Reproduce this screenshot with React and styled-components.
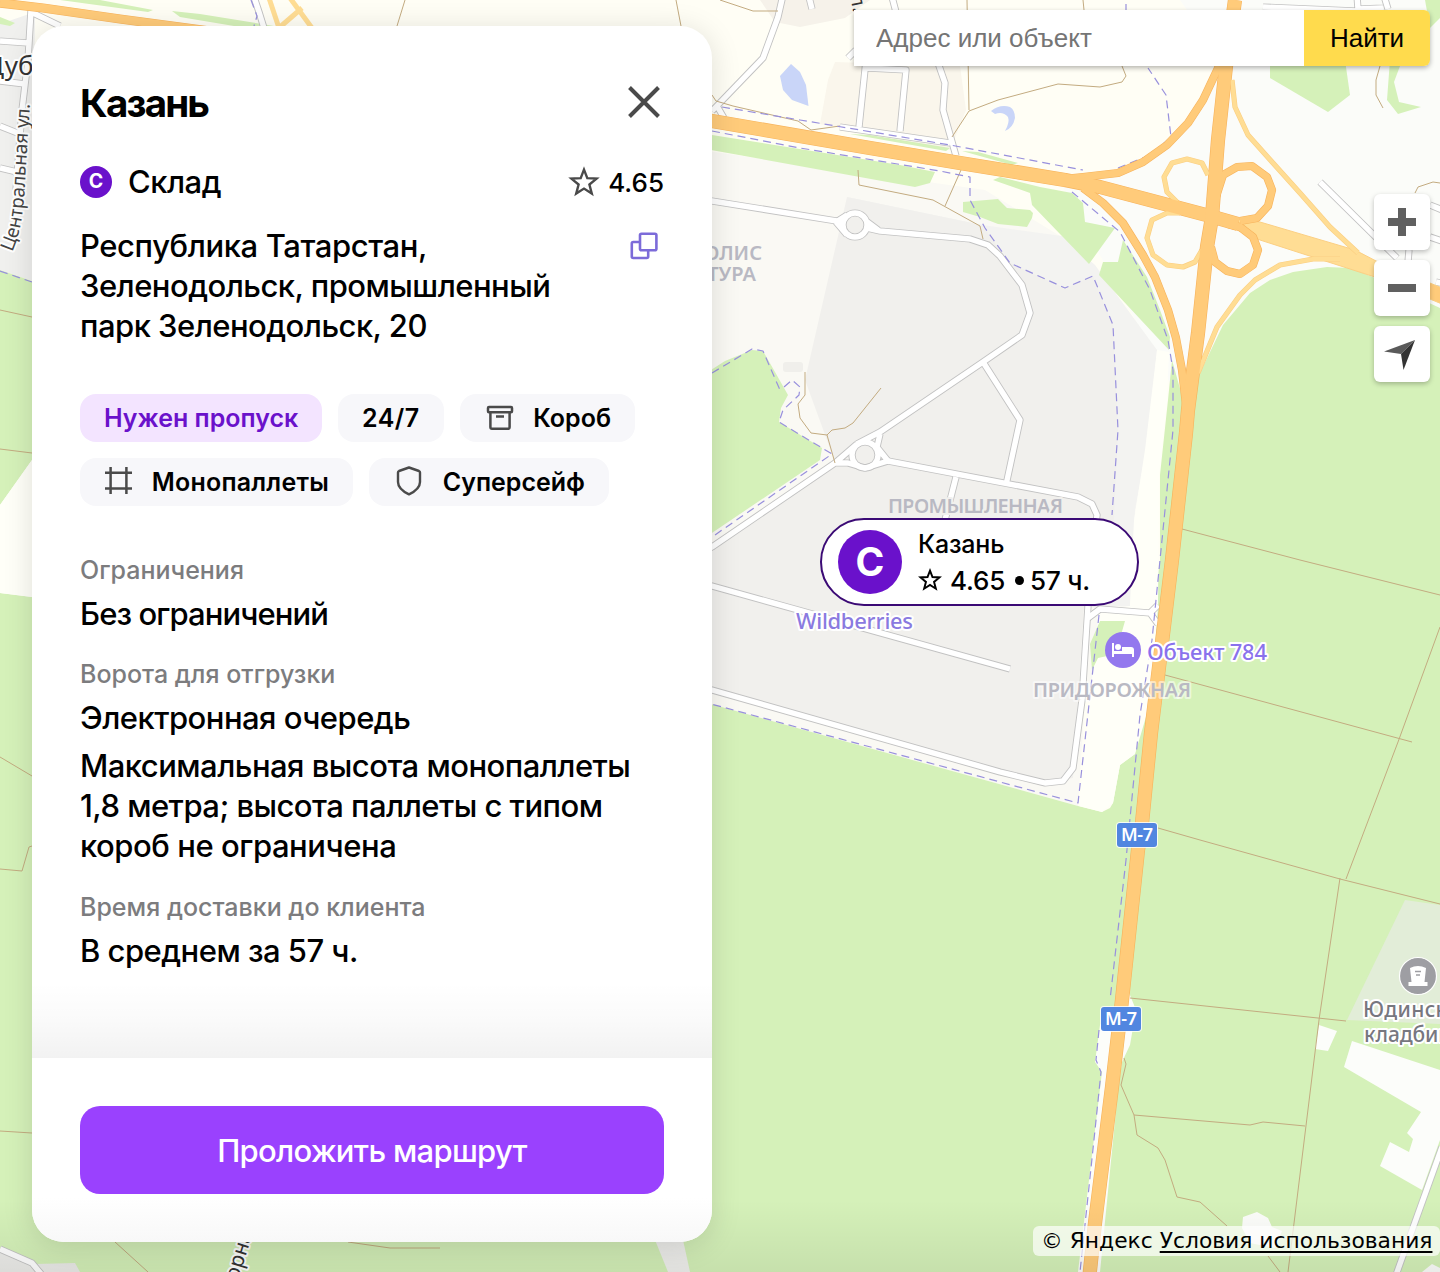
import React from "react";
import styled, { createGlobalStyle } from "styled-components";

const GlobalStyle = createGlobalStyle`
  * {
    box-sizing: border-box;
  }
  body {
    margin: 0;
    font-family: Inter, Roboto, "Liberation Sans", sans-serif;
    color: #000;
  }
  p, h1 {
    margin: 0;
  }
  button {
    border: none;
    padding: 0;
    font-family: inherit;
    cursor: pointer;
  }
`;

const Page = styled.main`
  position: relative;
  width: 1440px;
  height: 1272px;
  overflow: hidden;
  background-color: #fffef5;
`;

const MapCanvas = styled.svg`
  display: block;
  width: 1440px;
  height: 1272px;
`;

const MapLabel = styled.text`
  font-family: "Noto Sans", "Open Sans", sans-serif;
  font-size: ${({ $size }) => $size || 20}px;
  font-weight: ${({ $weight }) => $weight || 500};
  fill: ${({ $color }) => $color || "#b9b9c3"};
  stroke: ${({ $halo }) => $halo || "none"};
  stroke-width: 4px;
  stroke-linejoin: round;
  paint-order: stroke;
`;

const Card = styled.section`
  position: absolute;
  top: 26px;
  left: 32px;
  width: 680px;
  height: 1216px;
  display: flex;
  flex-direction: column;
  overflow: hidden;
  border-radius: 32px;
  background-color: white;
  box-shadow: 0 4px 30px rgba(0, 0, 0, 0.13);
`;

const CardBody = styled.div`
  flex: 1;
  padding: 53px 48px 0;
  background: linear-gradient(to bottom, rgba(0, 0, 0, 0) 0, rgba(0, 0, 0, 0.02) 50%, rgba(0, 0, 0, 0.05) 100%) bottom /
    100% 76px no-repeat;
`;

const CardFooter = styled.footer`
  height: 184px;
  padding: 48px 48px 0;
  background: linear-gradient(to bottom, white 76%, #f8f8f8 100%);
`;

const Row = styled.div`
  display: flex;
  justify-content: space-between;
  align-items: ${({ $align }) => $align || "center"};
  height: ${({ $height }) => $height}px;
  margin-bottom: ${({ $gap }) => $gap || 0}px;
`;

const Title = styled.h1`
  font-size: 38.5px;
  line-height: 48px;
  font-weight: 700;
  letter-spacing: -1.8px;
`;

const CloseButton = styled.button`
  display: flex;
  width: 40px;
  height: 40px;
  background-color: transparent;
`;

const Kind = styled.div`
  display: flex;
  align-items: center;
  gap: 16px;
  font-size: 31px;
  line-height: 38px;
  font-weight: 500;
  letter-spacing: -0.5px;
`;

const Avatar = styled.span`
  display: flex;
  flex-shrink: 0;
  align-items: center;
  justify-content: center;
  width: ${({ $size }) => $size}px;
  height: ${({ $size }) => $size}px;
  border-radius: 50%;
  background-color: #6a11cb;
  color: white;
  font-size: ${({ $size }) => $size * 0.61}px;
  line-height: 1;
  font-weight: 650;
  letter-spacing: 0;
`;

const Rating = styled.div`
  display: flex;
  align-items: center;
  gap: 8px;
  font-size: 26px;
  font-weight: 500;
`;

const Text = styled.p`
  font-size: 31px;
  line-height: 40px;
  font-weight: 500;
  letter-spacing: ${({ $spacing }) => $spacing ?? -0.53}px;
  margin-bottom: ${({ $gap }) => $gap || 0}px;
  white-space: nowrap;
`;

const Caption = styled.p`
  font-size: 25px;
  line-height: 32px;
  font-weight: 500;
  color: #7c7c7e;
  margin-bottom: 8px;
  white-space: nowrap;
`;

const Chips = styled.div`
  display: flex;
  flex-wrap: wrap;
  gap: 16px;
  margin: 48px 0;
`;

const Chip = styled.div`
  display: flex;
  align-items: center;
  justify-content: space-between;
  width: ${({ $width }) => $width}px;
  height: 48px;
  padding: 0 24px;
  border-radius: 16px;
  background-color: ${({ $accent }) => ($accent ? "#f3e4ff" : "#f7f7fa")};
  color: ${({ $accent }) => ($accent ? "#6a11cb" : "#000")};
  font-size: 25px;
  font-weight: 600;
  letter-spacing: ${({ $spacing }) => $spacing || 0}px;
  white-space: nowrap;
`;

const RouteButton = styled.button`
  width: 100%;
  height: 88px;
  border-radius: 20px;
  background-color: #9a41fe;
  color: white;
  font-size: 31px;
  font-weight: 500;
  letter-spacing: -0.7px;
`;

const Marker = styled.div`
  position: absolute;
  top: 518px;
  left: 820px;
  display: flex;
  align-items: center;
  gap: 16px;
  width: 319px;
  height: 88px;
  padding-left: 16px;
  border: 2px solid #3b0a75;
  border-radius: 44px;
  background-color: white;
`;

const MarkerLine = styled.p`
  display: flex;
  align-items: center;
  height: 36px;
  font-size: ${({ $size }) => $size}px;
  font-weight: 500;
  letter-spacing: ${({ $spacing }) => $spacing || 0}px;
  white-space: pre;
`;

const MarkerStar = styled.span`
  display: flex;
  margin-right: 8px;
`;

const Dot = styled.span`
  width: 9px;
  height: 9px;
  margin: 0 6px 0 10px;
  border-radius: 50%;
  background-color: #000;
`;

const Search = styled.form`
  position: absolute;
  top: 10px;
  left: 854px;
  display: flex;
  width: 576px;
  height: 56px;
  border-radius: 0 6px 6px 0;
  box-shadow: 0 2px 5px rgba(0, 0, 0, 0.3);
  overflow: hidden;
`;

const SearchInput = styled.input`
  width: 450px;
  padding: 0 22px;
  border: none;
  outline: none;
  background-color: white;
  font-family: "Liberation Sans", Arial, sans-serif;
  font-size: 26px;
  &::placeholder {
    color: #757575;
    opacity: 1;
  }
`;

const SearchButton = styled.button`
  flex: 1;
  background-color: #ffdb4d;
  color: #000;
  && {
    font-family: "Liberation Sans", Arial, sans-serif;
  }
  font-size: 26px;
`;

const Controls = styled.div`
  position: absolute;
  top: 194px;
  left: 1374px;
  display: flex;
  flex-direction: column;
  gap: 10px;
`;

const ControlButton = styled.button`
  width: 56px;
  height: 56px;
  border-radius: 6px;
  background-color: white;
  box-shadow: 0 2px 5px rgba(0, 0, 0, 0.25);
  svg {
    display: block;
  }
`;

const Copyright = styled.div`
  position: absolute;
  top: 1226px;
  left: 1033px;
  width: 407px;
  height: 30px;
  padding-left: 8px;
  border-radius: 6px;
  background-color: rgba(255, 255, 255, 0.68);
  font-family: "DejaVu Sans", sans-serif;
  font-size: 21.8px;
  line-height: 29px;
  white-space: nowrap;
  a {
    color: #000;
    text-underline-offset: 3px;
  }
`;

const GREEN = "#d5f1b9";
const ORANGE = "#ffcb7a";
const ORANGE_EDGE = "#f7b35c";
const LIGHT_ORANGE = "#ffdd94";

const FORESTS = [
  "700,701 1078,806 1102,812 1110,808 1113,803 1120,765 1135,754 1141,705 1160,560 1160,475 1168,400 1172,360 1186,410 1198,377 1223,325 1250,293 1270,280 1293,272 1327,267 1350,268 1373,277 1440,308 1440,1272 0,1272 0,593 32,597 700,701",
  "0,270 32,281 32,460 0,505",
  "700,377 725,361 752,350 763,351 775,372 788,395 781,408 779,422 822,448 820,460 700,541",
  "700,133 712,135 900,165 935,172 930,183 915,187 700,148",
  "850,134 870,135 950,148 946,151",
  "962,151 978,152 1018,163 1012,165",
  "993,180 1000,177 1040,187 1072,193 1083,203 1085,222 1115,228 1089,264 1032,205 1030,193",
  "1123,240 1147,277 1160,310 1170,337 1169,350 1099,275 1103,262 1118,262",
  "963,202 998,199 1007,208 1030,210 1033,213 1032,218 1027,227 998,224 980,217 963,212",
  "1270,60 1345,60 1350,95 1328,112 1270,78",
  "1390,60 1400,66 1394,82 1399,102 1421,107 1398,114 1387,100",
  "1425,0 1440,0 1440,18 1430,28",
  "60,0 100,0 153,10 148,12",
  "0,17 15,23 10,26 0,24",
  "172,11 200,14 280,27 240,27 180,17",
];

const HIGHWAYS = [
  { w: 4, light: true, d: "M1232 80 L1235 107 L1248 135 L1273 163 L1300 193 L1330 227 L1358 253" },
  { w: 4, light: true, d: "M1198 373 L1217 327 L1240 295 L1255 280 L1280 265 L1313 259 L1340 259" },
  { w: 4, light: true, d: "M1208 175 L1202 163 L1187 159 L1172 163 L1164 177 L1167 192 L1179 204" },
  { w: 4, light: true, d: "M1202 250 L1195 262 L1183 267 L1167 265 L1153 255 L1147 238 L1152 220 L1167 213 L1180 213" },
  { w: 7, d: "M1219 66 L1203 100 L1188 123 L1167 145 L1143 162 L1118 173 L1083 177 L1063 179" },
  { w: 7, d: "M1083 188 L1103 203 L1123 223 L1143 255 L1155 277 L1168 310 L1176 338 L1182 370 L1186 405" },
  { w: 7, d: "M1215 200 L1223 175 L1237 167 L1252 166 L1267 177 L1272 190 L1268 206 L1257 218 L1240 221" },
  { w: 7, d: "M1211 247 L1215 262 L1227 271 L1240 274 L1253 265 L1258 250 L1253 237 L1240 227 L1228 224" },
  { w: 13, d: "M700 119 L712 121 L870 148 L960 163 L1065 180 L1100 187 L1210 216 L1238 224" },
  { w: 13, d: "M1235 0 L1226 66 L1218 140 L1212 217 L1207 247 L1198 333 L1188 410 L1186 433 L1172 560 L1151 733 L1142 823 L1138 850 L1122 1000 L1112 1087 L1095 1223 L1089 1280" },
  { w: 8, d: "M0 3 L43 8 L120 19 L210 31" },
];

const ROADS = [
  "M700 199 L712 201 L843 222 M867 228 L880 231 L970 239 L988 245 L1000 256 L1022 285 L1030 313 L1022 335 L983 362 L880 432 L857 444",
  "M843 225 A12 12 0 1 1 867 225 A12 12 0 1 1 843 225 M836 222 L847 215 M836 222 L847 235 M866 221 L878 230",
  "M983 362 L1020 420 L1006 485",
  "M700 554 L712 547 L835 463 L857 444 M835 463 L848 463 L865 468 L888 461 L1078 497 L1092 504 L1097 515 L1095 530",
  "M852 455 A13 13 0 1 1 878 455 A13 13 0 1 1 852 455 M877 447 L880 434 M876 446 L888 461",
  "M956 477 L945 520",
  "M700 583 L712 586 L1010 669",
  "M700 687 L712 690 L1000 772 L1045 783 L1063 781 L1073 768 L1082 700 L1088 606",
  "M1088 618 L1100 609 L1150 613 L1158 605 M1150 613 L1158 624",
  "M783 -5 L778 17 L763 58 L712 111 M717 106 L724 118",
  "M809 -3 L812 9",
  "M892 -3 L896 12",
  "M848 58 L856 50",
  "M866 60 L859 127 M866 68 L906 70 L900 131",
  "M937 60 L945 83 L943 110 L956 156 M840 127 L950 143",
  "M1320 182 L1397 258 M1430 205 L1445 211 M1430 237 L1445 242 M1408 262 L1409 250 M1436 282 L1445 284",
  "M1263 7 L1357 11 M1357 -4 L1358 9 L1383 8 M1384 -4 L1388 9",
  "M1442 1147 L1396 1275",
  "M31 10 L28 60 L22 110 L16 190 M31 12 L60 26 M0 41 L28 43 M0 81 L25 84 M0 126 L20 134 M0 168 L17 172",
  "M254 -3 L259 12 L264 28",
  "M0 1249 L32 1263 L42 1275",
];

const TRACKS = [
  "M720 0 L753 11 L778 11",
  "M967 0 L969 110 M952 137 L969 111 L998 100 L1058 84 L1100 87 L1122 82 L1126 76 L1122 66",
  "M712 95 L716 101 L733 106 L798 121 L811 130 L840 126",
  "M858 170 L859 185 L933 200 L980 226 L983 239 M961 170 L945 206",
  "M805 372 L805 395 L798 404 L800 418 L811 433 L827 435 L835 463 M827 435 L832 430 L845 428 L853 423 L881 388",
  "M1083 0 L1084 10 M405 0 L397 26 M676 0 L681 26",
  "M1380 66 L1376 80 L1376 95 L1383 108 M1415 193 L1418 187 L1433 182 L1440 183",
  "M1182 529 L1300 560 L1440 595",
  "M1165 675 L1412 742",
  "M1440 627 L1398 742 L1346 879",
  "M1158 828 L1200 840 L1340 879 L1440 904",
  "M1340 878 L1319 1020 L1288 1272",
  "M1130 998 L1346 1021",
  "M1124 1058 L1126 1064 L1121 1085 L1134 1115 L1137 1135 L1158 1148 L1165 1160 L1177 1197 L1200 1202 L1227 1226",
  "M1134 1115 L1250 1125 L1263 1122 L1305 1126 M1268 1256 L1280 1272",
  "M0 310 L32 317 M0 449 L32 453 M0 757 L32 776 M0 869 L22 871 L29 847 L32 846 M0 1131 L32 1133",
  "M115 1242 L148 1272 M348 1242 L390 1248 L440 1248",
];

const BORDERS = [
  "M722 107 L800 120 L950 145 L1083 170",
  "M1118 168 L1150 155 L1171 137 L1166 95 L1148 68 M1126 4 L1126 10",
  "M712 131 L800 148 L940 171 L970 177 L970 200 L985 228 L1010 263 L1065 288 L1093 276 L1113 325 L1118 430 L1112 515",
  "M1072 192 L1120 232 L1150 290 L1168 340 L1173 370 L1173 430 L1160 560 L1152 640 L1140 715 L1126 860 L1110 1000",
  "M1099 1030 L1096 1060 L1101 1072 L1095 1130 L1080 1272",
  "M1099 615 L1078 803 L700 701",
  "M712 373 L752 349 L763 351 L780 390 M784 387 L792 380 L800 387 L799 395 L783 410 L779 422 L832 454 L712 537",
  "M251 0 L257 16 L254 26 M0 271 L32 282",
];

const StarIcon = ({ size, color, stroke = 2 }) => (
  <svg width={size} height={size} viewBox="0 0 32 32" fill="none" stroke={color} strokeWidth={stroke}>
    <path d="M16 3.6 L19.3 12.1 L28.6 12.6 L21.4 18.5 L23.8 27.6 L16 22.6 L8.2 27.6 L10.6 18.5 L3.4 12.6 L12.7 12.1 Z" />
  </svg>
);

const CloseIcon = () => (
  <svg width="40" height="40" viewBox="0 0 40 40" fill="none" stroke="#4a4a4a" strokeWidth="4">
    <path d="M5.5 4.5 L34.5 33.5 M34.5 4.5 L5.5 33.5" />
  </svg>
);

const CopyIcon = () => (
  <svg width="40" height="40" viewBox="0 0 40 40" fill="none" stroke="#7c6bd9" strokeWidth="2.6" strokeLinejoin="round">
    <rect x="16" y="7.8" width="16.4" height="16.4" rx="1.5" />
    <path d="M16 16 H9.2 Q7.8 16 7.8 17.4 V30.6 Q7.8 32 9.2 32 H22.8 Q24.2 32 24.2 30.6 V24.2" />
  </svg>
);

const BoxIcon = () => (
  <svg width="32" height="32" viewBox="0 0 32 32" fill="none" stroke="#4a4a4a" strokeWidth="2.5" strokeLinejoin="round">
    <rect x="4" y="5" width="24" height="5.2" rx="1" />
    <path d="M6.4 10.4 V25 Q6.4 26.8 8 26.8 H24 Q25.6 26.8 25.6 25 V10.4 M12 14.6 H20" />
  </svg>
);

const PalletIcon = () => (
  <svg width="32" height="32" viewBox="0 0 32 32" fill="none" stroke="#4a4a4a" strokeWidth="2.5">
    <path d="M1 6.8 H28 M1 22.6 H28 M6.6 1 V28 M22.4 1 V28" />
  </svg>
);

const ShieldIcon = () => (
  <svg width="32" height="32" viewBox="0 0 32 32" fill="none" stroke="#4a4a4a" strokeWidth="2.4" strokeLinejoin="round">
    <path d="M16 1.5 L26 5 Q27 5.4 27 6.4 V16 C27 21.5 22 25.5 16 28.4 C10 25.5 5 21.5 5 16 V6.4 Q5 5.4 6 5 Z" />
  </svg>
);

const RouteBadge = ({ x, y }) => (
  <g transform={`translate(${x} ${y})`}>
    <rect x="-1" y="-1" width="42" height="26" rx="4" fill="#fff" opacity="0.8" />
    <rect width="40" height="24" rx="3" fill="#5186e0" />
    <MapLabel x="4" y="18" $size={18} $weight={600} $color="#fff" textLength="32">
      М-7
    </MapLabel>
  </g>
);

function MapView() {
  return (
    <MapCanvas viewBox="0 0 1440 1272">
      <defs>
        <linearGradient id="bottomShade" x1="0" y1="0" x2="0" y2="1">
          <stop offset="0" stopColor="#000" stopOpacity="0" />
          <stop offset="1" stopColor="#000" stopOpacity="0.07" />
        </linearGradient>
      </defs>
      <polygon fill="#fbfcf9" points="1180,0 1440,0 1440,320 1190,420 1060,182 1118,176 1167,145 1226,66" />
      <polygon fill="#f6f2ea" points="760,0 870,0 845,18 800,27 775,22" />
      <polygon fill="#faf6ec" points="835,62 960,66 966,110 950,150 820,124 828,80" />
      <polygon fill="#faf9f4" points="700,150 985,190 1060,236 1157,350 1130,610 1085,700 1078,806 700,701" />
      <polygon fill="#f3f3f1" points="847,197 982,225 1062,236 1095,265 1157,350 1148,440 1135,510 1130,606 1086,606 1110,500 990,240" />
      <polygon fill="#f1f0ed" points="847,197 982,225 1010,263 1065,288 1093,276 1113,325 1118,430 1110,606 1084,608 1073,778 1040,783 700,687 700,552 835,462 805,380" />
      <polygon fill="#f0f0ee" points="0,24 35,12 32,281 0,270" />
      {FORESTS.map((points) => (
        <polygon key={points} points={points} fill={GREEN} />
      ))}
      <polygon fill="#fffff8" points="0,505 32,460 32,597 0,593" />
      <polygon fill="#fffff8" points="1157,350 1169,352 1167,400 1159,475 1158,606 1151,700 1135,754 1120,765 1113,803 1102,812 1079,806 1099,611 1130,606 1134,520 1145,450" />
      <polygon points="1100,621 1125,621 1121,635 1112,655 1098,658 1092,670 1090,644" fill={GREEN} />
      <polygon fill="#e2edd8" points="1405,900 1440,905 1440,1024 1347,1020" />
      <g fill="#fcfdfa">
        <polygon points="1319,1025 1337,1031 1328,1051 1315,1049" />
        <polygon points="1352,1041 1440,1070 1440,1140 1422,1190 1380,1166 1390,1142 1409,1152 1413,1139 1407,1133 1421,1112 1344,1067" />
        <polygon points="1242,1228 1243,1217 1257,1212 1268,1218 1272,1227 1282,1231 1275,1248 1250,1243" />
        <polygon points="1100,1025 1095,1062 1102,1072 1095,1130 1078,1272 1100,1272 1118,1090 1122,1062 1130,1045 1136,1010 1128,990" />
        <polygon points="1422,1272 1432,1264 1440,1268 1440,1272" />
      </g>
      <polygon fill="#ecece9" points="0,1252 35,1264 75,1263 80,1272 0,1272" />
      <polygon fill="#f1f1ee" points="655,1240 683,1240 690,1272 668,1272" />
      <path d="M791 64 L800 72 L806 85 L808.5 106 L792 100 L783 90 L780 76 Z" fill="#c9d5f8" />
      <path d="M991 111 Q1000 104 1010 107 Q1015 110 1015 118 Q1013 128 1005 131 Q1010 122 1008 117 Q1003 111 995 114 Z" fill="#c9d5f8" />
      <rect x="783" y="362" width="20" height="10" rx="3" fill="#f0efeb" />

      <g fill="none" strokeLinejoin="round">
        {ROADS.map((d) => (
          <path key={d} d={d} stroke="#c2c2c2" strokeWidth="7.2" />
        ))}
        {ROADS.map((d) => (
          <path key={d} d={d} stroke="#fff" strokeWidth="5.4" />
        ))}
        {TRACKS.map((d) => (
          <path key={d} d={d} stroke="#c3ab80" strokeWidth="1" />
        ))}
        {BORDERS.map((d) => (
          <path key={d} d={d} stroke="#9890dd" strokeWidth="1.2" strokeDasharray="8 5" />
        ))}
        <path d="M269 -2 L279 28 M290 -2 L312 28 M302 8 L280 27" stroke={LIGHT_ORANGE} strokeWidth="5" />
        <g fill={LIGHT_ORANGE} stroke="#fbcf83" strokeWidth="1">
          <polygon points="1228,217 1260,222 1355,250 1378,262 1378,278 1350,269 1260,240 1228,226" />
          <polygon points="1425,281 1442,288 1442,304 1425,297" fill={ORANGE} />
        </g>
        {HIGHWAYS.map(({ d, w, light }) => (
          <path key={d} d={d} stroke={light ? "#fbcf83" : ORANGE_EDGE} strokeWidth={w + 1.2} />
        ))}
        {HIGHWAYS.map(({ d, w, light }) => (
          <path key={d} d={d} stroke={light ? LIGHT_ORANGE : ORANGE} strokeWidth={w} />
        ))}
      </g>

      <MapLabel x="-15" y="75" $size={26} $weight={400} $color="#333" $halo="#fff">
        Дуб
      </MapLabel>
      <path id="street" d="M12 252 Q23 228 24.5 190 L30 102" fill="none" />
      <MapLabel $size={19} $weight={400} $color="#444" $halo="#fff">
        <textPath href="#street" textLength="150">
          Центральная ул.
        </textPath>
      </MapLabel>
      <MapLabel transform="translate(238 1281) rotate(-73)" $size={21} $weight={400} $color="#333" $halo="#fff">
        орная
      </MapLabel>
      <MapLabel transform="translate(850 -4) rotate(78)" $size={20} $weight={400} $color="#333">
        л.
      </MapLabel>
      <MapLabel x="762" y="260" textAnchor="end" $weight={600}>
        ПОЛИС
      </MapLabel>
      <MapLabel x="756" y="281" textAnchor="end" $weight={600}>
        ТУРА
      </MapLabel>
      <MapLabel x="888" y="513" textLength="175" $weight={600} $halo="#f1f0ed">
        ПРОМЫШЛЕННАЯ
      </MapLabel>
      <MapLabel x="1033" y="697" textLength="158" $weight={600} $halo="rgba(255,255,255,0.5)">
        ПРИДОРОЖНАЯ
      </MapLabel>
      <MapLabel x="796" y="629" textLength="117" $size={22} $color="#8a7ae0" $halo="#fff">
        Wildberries
      </MapLabel>
      <MapLabel x="1147" y="660" textLength="120" $size={22} $color="#8a72ec" $halo="#fff">
        Объект 784
      </MapLabel>
      <g transform="translate(1123 650)">
        <circle r="18" fill="#9378ee" />
        <g fill="#fff">
          <path d="M-11 -7 H-9 V1 H11 V7 H9 V4 H-9 V7 H-11 Z" />
          <circle cx="-5" cy="-3" r="3" />
          <path d="M-1 -3 H8 Q11 -3 11 0 V2 H-1 Z" />
        </g>
      </g>
      <g transform="translate(1418 976)">
        <circle r="18.5" fill="#9e9ea3" stroke="#fff" strokeWidth="1.2" />
        <path d="M-8 -8 Q0 -12 8 -8 L6.5 6 H9.5 V10 H-9.5 V6 H-6.5 Z" fill="#fff" />
        <path d="M-3 -4.5 H3 M-2 -1 H2" stroke="#9e9ea3" strokeWidth="1.5" />
      </g>
      <MapLabel x="1363" y="1017" textLength="109" $size={21} $color="#77777f" $halo="#fff">
        Юдинское
      </MapLabel>
      <MapLabel x="1364" y="1042" textLength="105" $size={21} $color="#77777f" $halo="#fff">
        кладбище
      </MapLabel>
      <RouteBadge x={1117} y={823} />
      <RouteBadge x={1101} y={1007} />
      <rect x="0" y="1200" width="1440" height="72" fill="url(#bottomShade)" />
    </MapCanvas>
  );
}

function WarehouseCard() {
  return (
    <Card>
      <CardBody>
        <Row $height={48} $gap={35}>
          <Title>Казань</Title>
          <CloseButton aria-label="Закрыть">
            <CloseIcon />
          </CloseButton>
        </Row>
        <Row $height={40} $gap={24}>
          <Kind>
            <Avatar $size={32}>С</Avatar>
            Склад
          </Kind>
          <Rating>
            <StarIcon size={32} color="#4a4a4a" stroke={2.4} />
            4.65
          </Rating>
        </Row>
        <Row $height={120} $align="flex-start">
          <div>
            <Text $spacing={-0.4}>Республика Татарстан,</Text>
            <Text>Зеленодольск, промышленный</Text>
            <Text>парк Зеленодольск, 20</Text>
          </div>
          <CopyIcon />
        </Row>
        <Chips>
          <Chip $accent $width={242}>Нужен пропуск</Chip>
          <Chip $width={106} $spacing={0.5}>24/7</Chip>
          <Chip $width={175}>
            <BoxIcon />
            Короб
          </Chip>
          <Chip $width={273} $spacing={0.2}>
            <PalletIcon />
            Монопаллеты
          </Chip>
          <Chip $width={240}>
            <ShieldIcon />
            Суперсейф
          </Chip>
        </Chips>
        <Caption>Ограничения</Caption>
        <Text $gap={24} $spacing={-0.9}>Без ограничений</Text>
        <Caption>Ворота для отгрузки</Caption>
        <Text $gap={8}>Электронная очередь</Text>
        <Text>Максимальная высота монопаллеты</Text>
        <Text>1,8 метра; высота паллеты с типом</Text>
        <Text $gap={25} $spacing={-0.45}>короб не ограничена</Text>
        <Caption>Время доставки до клиента</Caption>
        <Text>В среднем за 57 ч.</Text>
      </CardBody>
      <CardFooter>
        <RouteButton>Проложить маршрут</RouteButton>
      </CardFooter>
    </Card>
  );
}

function App() {
  return (
    <>
      <GlobalStyle />
      <Page>
        <MapView />
        <Marker>
          <Avatar $size={64}>С</Avatar>
          <div>
            <MarkerLine $size={25} $spacing={-0.2}>Казань</MarkerLine>
            <MarkerLine $size={26} $spacing={-0.2}>
              <MarkerStar>
                <StarIcon size={24} color="#000" stroke={2.6} />
              </MarkerStar>
              4.65
              <Dot />
              57 ч.
            </MarkerLine>
          </div>
        </Marker>
        <WarehouseCard />
        <Search onSubmit={(e) => e.preventDefault()}>
          <SearchInput placeholder="Адрес или объект" />
          <SearchButton>Найти</SearchButton>
        </Search>
        <Controls>
          <ControlButton aria-label="Приблизить">
            <svg width="56" height="56" viewBox="0 0 56 56" fill="#606060">
              <path d="M24 14 H32 V24 H42 V32 H32 V42 H24 V32 H14 V24 H24 Z" />
            </svg>
          </ControlButton>
          <ControlButton aria-label="Отдалить">
            <svg width="56" height="56" viewBox="0 0 56 56" fill="#606060">
              <path d="M14 24 H42 V32 H14 Z" />
            </svg>
          </ControlButton>
          <ControlButton aria-label="Моё местоположение">
            <svg width="56" height="56" viewBox="0 0 56 56">
              <path d="M41 14 L10 25.5 L27 28 Z" fill="#5a5a5a" />
              <path d="M41 14 L27 28 L29.5 44 Z" fill="#333" />
            </svg>
          </ControlButton>
        </Controls>
        <Copyright>
          © Яндекс <a href="#terms">Условия использования</a>
        </Copyright>
      </Page>
    </>
  );
}

export default App;
